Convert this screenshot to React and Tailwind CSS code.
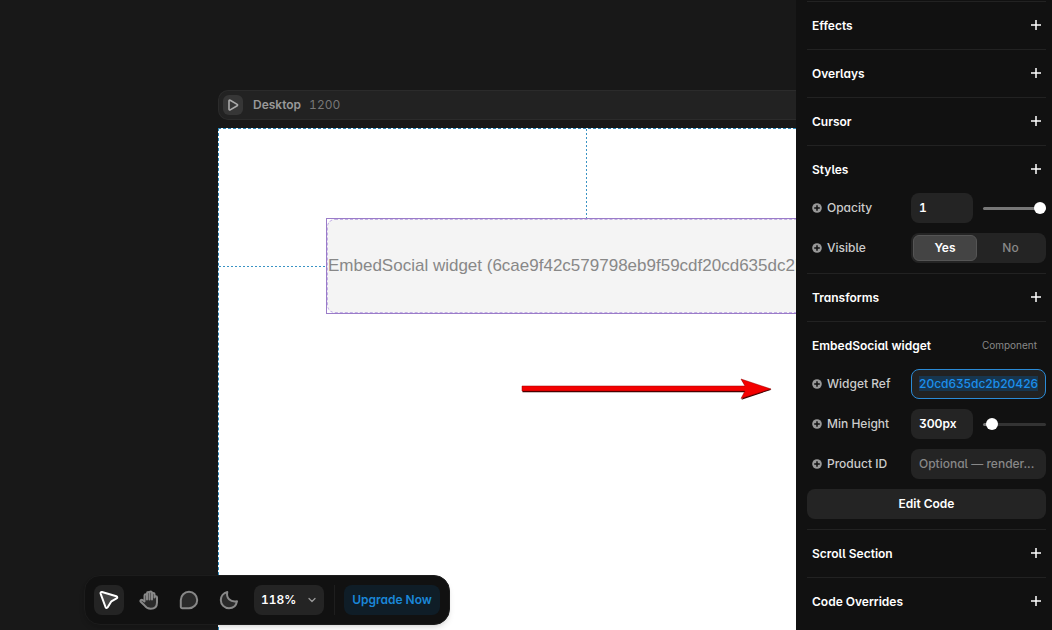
import React, { useEffect, useRef, useState } from "react";
import { ChevronDown } from "lucide-react";

const PlusIcon = () => (
  <svg width="10" height="10" viewBox="0 0 10 10" fill="none" stroke="currentColor" strokeWidth="1.5">
    <path d="M5 0v10M0 5h10" />
  </svg>
);

const AddDot = () => (
  <svg width="10" height="10" viewBox="0 0 10 10" className="shrink-0">
    <circle cx="5" cy="5" r="4.8" fill="#999" />
    <path d="M5 2.2v5.6M2.2 5h5.6" stroke="#111" strokeWidth="1.5" />
  </svg>
);

const Section = ({ title, note, children }) => (
  <section className="border-t border-[#222]">
    <div className="flex h-[47px] items-center justify-between pl-[5px] pr-[5px]">
      <h2 className="font-semibold text-white">{title}</h2>
      {note ? (
        <span className="pr-1 text-[10px] text-[#888]">{note}</span>
      ) : (
        <button type="button" aria-label={"Add " + title} className="pb-0.5 text-white">
          <PlusIcon />
        </button>
      )}
    </div>
    {children && <div className="flex flex-col gap-2.5 pb-2.5">{children}</div>}
  </section>
);

const Row = ({ label, htmlFor, children }) => (
  <div className="flex h-[30px] items-center">
    <div className="flex flex-1 items-center gap-[5px] pl-[5px] font-medium text-[#ccc]">
      <AddDot />
      <label htmlFor={htmlFor}>{label}</label>
    </div>
    <div className="flex h-full w-[135px] items-center gap-2.5">{children}</div>
  </div>
);

const Slider = ({ label, value, onChange }) => {
  const fill = `linear-gradient(to right, #777 ${value}%, #333 ${value}%)`;
  return (
    <input
      type="range"
      aria-label={label}
      value={value}
      onChange={(e) => onChange(Number(e.target.value))}
      style={{ backgroundImage: fill }}
      className="h-[3px] w-0 min-w-0 flex-1 appearance-none rounded-full [&::-webkit-slider-thumb]:size-3 [&::-webkit-slider-thumb]:appearance-none [&::-webkit-slider-thumb]:rounded-full [&::-webkit-slider-thumb]:bg-white"
    />
  );
};

const Panel = () => {
  const [opacity, setOpacity] = useState(100);
  const [height, setHeight] = useState(6);
  const [visible, setVisible] = useState("Yes");
  const refInput = useRef(null);

  useEffect(() => {
    refInput.current.focus();
    refInput.current.select();
  }, []);

  return (
    <aside className="h-full w-64 shrink-0 overflow-hidden bg-[#111] pl-[11px] pr-1.5 pt-px">
      <Section title="Effects" />
      <Section title="Overlays" />
      <Section title="Cursor" />
      <Section title="Styles">
        <Row label="Opacity" htmlFor="opacity">
          <input id="opacity" defaultValue="1" className="h-full w-[62px] rounded-lg bg-[#242424] px-2 pb-0.5 font-semibold text-white outline-none [font-feature-settings:'tnum']" />
          <Slider label="Opacity slider" value={opacity} onChange={setOpacity} />
        </Row>
        <Row label="Visible" htmlFor="visible-Yes">
          <div className="grid h-full w-full grid-cols-[64px_1fr] rounded-lg bg-[#242424] p-0.5">
            {["Yes", "No"].map((opt) => (
              <label
                key={opt}
                className={
                  visible === opt
                    ? "flex items-center justify-center rounded-md border border-[#555] bg-[#444] font-semibold text-white"
                    : "flex items-center justify-center font-medium text-[#888]"
                }
              >
                <input
                  type="radio"
                  name="visible"
                  id={"visible-" + opt}
                  checked={visible === opt}
                  onChange={() => setVisible(opt)}
                  className="sr-only"
                />
                {opt}
              </label>
            ))}
          </div>
        </Row>
      </Section>
      <Section title="Transforms" />
      <Section title="EmbedSocial widget" note="Component">
        <Row label="Widget Ref" htmlFor="widget-ref">
          <input
            ref={refInput}
            id="widget-ref"
            defaultValue="20cd635dc2b20426"
            className="h-full w-full rounded-lg border border-[#2b8bd6] bg-[#222] px-[7px] pb-0.5 font-medium text-[#1c8fec] outline-none selection:bg-[#17364f] selection:text-[#1c8fec]"
          />
        </Row>
        <Row label="Min Height" htmlFor="min-height">
          <input id="min-height" defaultValue="300px" className="h-full w-[62px] rounded-lg bg-[#242424] px-2 pb-0.5 font-semibold text-white outline-none" />
          <Slider label="Min height slider" value={height} onChange={setHeight} />
        </Row>
        <Row label="Product ID" htmlFor="product-id">
          <input
            id="product-id"
            placeholder="Optional — render..."
            className="h-full w-full rounded-lg bg-[#242424] px-2 pb-0.5 font-medium outline-none placeholder:text-[#888]"
          />
        </Row>
        <button type="button" className="h-[30px] w-full rounded-lg bg-[#242424] font-semibold text-white">
          Edit Code
        </button>
      </Section>
      <Section title="Scroll Section" />
      <Section title="Code Overrides" />
    </aside>
  );
};

const tools = [
  {
    name: "Select",
    icon: <path d="M3 2 17.4 6.2c1.1.3 1.200 1.700.2 2.200L12.400 11.300 8.700 17.300c-.6.9-1.900.8-2.200-.3L1.600 3.600C1.300 2.600 2 1.700 3 2Z" />,
  },
  {
    name: "Hand",
    icon: (
      <path d="M5.5 11.5V5.4a1.25 1.25 0 0 1 2.500 0V9.500 3.200a1.250 1.250 0 0 1 2.500 0V9.500 2.800a1.250 1.250 0 0 1 2.500 0V9.500 4.200a1.250 1.250 0 0 1 2.500 0V7.500a1.250 1.250 0 0 1 2.500 0V12.500c0 4-2.500 6.300-6.300 6.300-3.200 0-4.700-1.300-6.300-3.600L1.700 11.700c-.8-1.300.8-2.700 2-1.500Z" />
    ),
  },
  {
    name: "Comment",
    icon: <path d="M10 1.8a8.2 8.2 0 0 1 0 16.4H3.3a1.5 1.5 0 0 1-1.5-1.5V10A8.2 8.2 0 0 1 10 1.8Z" />,
  },
  {
    name: "Theme",
    icon: <path d="M8.3 2C7 8 11 12.4 18 11.3 17.2 15.6 14 18.3 10 18.3a8.2 8.2 0 0 1-8.2-8.2C1.8 6 4.5 2.8 8.3 2Z" />,
  },
];

const Toolbar = () => (
  <div className="absolute bottom-[5px] left-[84px] flex h-[50px] items-center gap-2.5 rounded-2xl border border-[#1c1c1c] bg-[#111] px-[9px] shadow-md">
    {tools.map((tool, i) => (
      <button
        key={tool.name}
        type="button"
        aria-label={tool.name}
        className={
          i === 0
            ? "flex size-[30px] items-center justify-center rounded-lg bg-[#242424] text-white"
            : "flex size-[30px] items-center justify-center rounded-lg text-[#888]"
        }
      >
        <svg width="20" height="20" viewBox="0 0 20 20" fill={i === 0 ? "#444" : "#2a2a2a"} stroke="currentColor" strokeWidth="2" strokeLinejoin="round">
          {tool.icon}
        </svg>
      </button>
    ))}
    <div className="relative flex h-[30px] w-[70px] items-center rounded-lg bg-[#242424]">
      <select aria-label="Zoom" className="h-full w-full appearance-none bg-transparent pl-[7px] font-semibold text-white outline-none [font-feature-settings:'tnum']">
        <option>118%</option>
      </select>
      <ChevronDown size={12} strokeWidth={2.5} color="#999" className="pointer-events-none absolute right-1.5" />
    </div>
    <div className="flex items-center gap-[9px]">
      <span className="h-[30px] w-px bg-[#1e1e1e]" />
      <button type="button" className="h-[30px] w-24 whitespace-nowrap rounded-lg bg-[#0f1d27] font-semibold text-[#1a87d8]">
        Upgrade Now
      </button>
    </div>
  </div>
);

const Canvas = () => (
  <main className="relative flex min-w-0 flex-1 flex-col overflow-hidden bg-[#181818] pl-[218px] pt-[90px]">
    <div className="flex h-[30px] shrink-0 items-center rounded-l-[10px] border border-r-0 border-[#2b2b2b] bg-[#222] pl-1">
      <button type="button" aria-label="Preview" className="flex size-5 items-center justify-center rounded-md bg-[#363636]">
        <svg width="12" height="12" viewBox="0 0 12 12" fill="none" stroke="#aaa" strokeWidth="1.6" strokeLinejoin="round">
          <path d="M2 1.8v8.4c0 .6.6 1 1.2.7l7-4.2c.5-.3.5-1 0-1.3l-7-4.2C2.6.8 2 1.2 2 1.8Z" />
        </svg>
      </button>
      <span className="pl-2.5 font-semibold text-[#999]">Desktop</span>
      <span className="pl-2 text-[#777] [font-feature-settings:'tnum']">1200</span>
    </div>

    <div className="relative mt-2 flex-1 border-l border-t border-dashed border-[#2a86b8] bg-white pl-[107px] pt-[89px]">
      {/* distance guides */}
      <div className="absolute left-0 top-[137px] h-px w-[107px] bg-[repeating-linear-gradient(to_right,#3a93c4_0px_2px,transparent_2px_4px)]" />
      <div className="absolute left-[367px] top-0 h-[89px] w-px bg-[repeating-linear-gradient(to_bottom,#3a93c4_0px_2px,transparent_2px_4px)]" />

      <div className="h-24 border border-r-0 border-[#9a7cc8] bg-white">
        <div className="flex h-full items-center overflow-hidden rounded-l-lg border border-r-0 border-dashed border-[#c4b0e6] bg-[#f4f4f4]">
          <p className="whitespace-nowrap font-['Liberation_Sans',Arial,sans-serif] text-[17px] text-[#888]">
            EmbedSocial widget (6cae9f42c579798eb9f59cdf20cd635dc2b20426)
          </p>
        </div>
      </div>

      <svg width="252" height="24" viewBox="0 0 252 24" className="absolute left-[302px] top-[248px]">
        <path d="M1 9.5H225L220 2 250 12 220 22 225 14.5H1Z" fill="#300" transform="translate(0.5 0.7)" />
        <path d="M1 9H224L220 2 250 12 220 21.5 224 14H1Z" fill="#f40000" stroke="#900" strokeWidth="0.5" />
      </svg>
    </div>

    <Toolbar />
  </main>
);

const App = () => (
  <div className="flex h-screen overflow-hidden font-[Inter,sans-serif] text-xs [font-feature-settings:'cv01','cv05','cv09','cv11','ss03']">
    <Canvas />
    <Panel />
  </div>
);

export default App;
